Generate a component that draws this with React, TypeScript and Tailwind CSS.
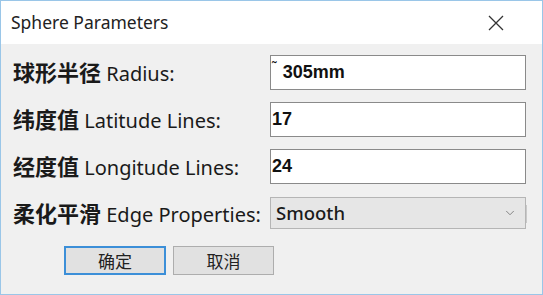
import { ChevronDown } from "lucide-react";

const rows = [
  { zh: "球形半径", en: "Radius:", value: "305mm", tilde: true },
  { zh: "纬度值", en: "Latitude Lines:", value: "17", tilde: false },
  { zh: "经度值", en: "Longitude Lines:", value: "24", tilde: false },
];

const labelFont = "[font-family:'Noto_Sans','Noto_Sans_CJK_SC',sans-serif]";

function Label({ zh, en }: { zh: string; en: string }) {
  return (
    <div className={`w-[257px] whitespace-nowrap text-[20px] text-[#1a1a1a] ${labelFont}`}>
      <span className="text-[22px] font-semibold">{zh}</span> {en}
    </div>
  );
}

export default function App() {
  return (
    <div className="flex h-[295px] w-[543px] flex-col border border-[#9ac6e8] bg-[#f0f0f0]">
      {/* title bar */}
      <div className="flex h-[43px] items-center justify-between bg-white pl-[10px] pr-[38px]">
        <span className="text-[17.5px] text-[#222] [font-family:'Noto_Sans',sans-serif]">Sphere Parameters</span>
        <svg width="16" height="16" viewBox="0 0 16 16" className="text-[#333]">
          <path d="M1 1 L15 15 M15 1 L1 15" stroke="currentColor" strokeWidth="1.3" fill="none" />
        </svg>
      </div>

      <div className="flex flex-1 flex-col pl-[12px] pt-[11px]">
        {rows.map((r, i) => (
          <div key={r.en} className={`flex h-[35px] items-center ${i > 0 ? "mt-[12px]" : ""}`}>
            <Label zh={r.zh} en={r.en} />
            <div className="flex h-[35px] w-[256px] items-center border border-[#8a8a8a] bg-white pl-[1px] text-[18px] font-bold text-[#111] [font-family:'Liberation_Sans',sans-serif]">
              {r.tilde && <span className="mr-[6px] self-start pt-[1px] text-[14px] font-normal">˜</span>}
              {r.value}
            </div>
          </div>
        ))}

        <div className="mt-[13px] flex h-[32px] items-center">
          <Label zh="柔化平滑" en="Edge Properties:" />
          <div className="flex h-[32px] w-[256px] items-center justify-between border border-[#b5b5b5] bg-[#e6e6e6] pl-[5px] pr-[8px] shadow-[8px_1px_0_-7px_#c9c9c9]">
            <span className="text-[18.5px] font-medium text-[#1a1a1a] [font-family:'Noto_Sans',sans-serif]">Smooth</span>
            <ChevronDown className="h-[14px] w-[14px] text-[#777]" strokeWidth={1.5} />
          </div>
        </div>

        <div className="mt-[17px] flex gap-[7px] pl-[51px]">
          <button className="flex h-[29px] w-[102px] items-center justify-center border-2 border-[#3c8fd8] bg-[#e1e1e1] text-[17px] text-[#222] [font-family:'Noto_Sans_CJK_SC',sans-serif]">
            确定
          </button>
          <button className="flex h-[29px] w-[101px] items-center justify-center border border-[#adadad] bg-[#e1e1e1] text-[17px] text-[#222] [font-family:'Noto_Sans_CJK_SC',sans-serif]">
            取消
          </button>
        </div>
      </div>
    </div>
  );
}
